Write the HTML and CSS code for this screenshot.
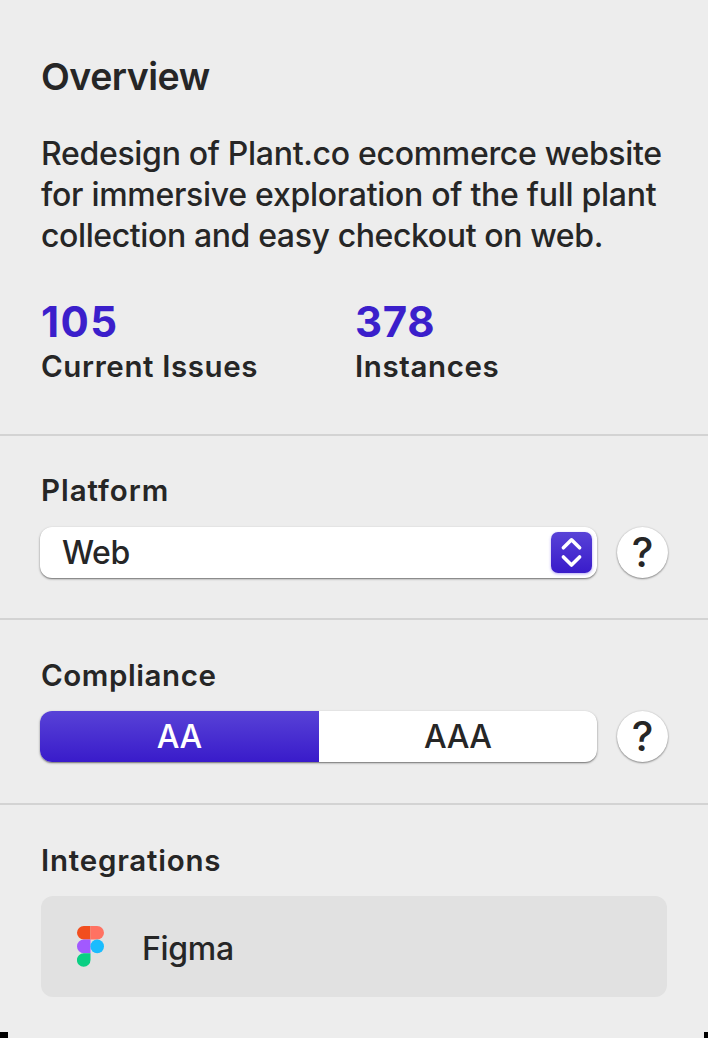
FILE: index.html
```html
<!DOCTYPE html>
<html lang="en">
<head>
<meta charset="utf-8">
<title>Overview</title>
<link rel="stylesheet" href="styles.css">
</head>
<body>
<main class="panel">
  <section class="section overview">
    <h1 class="title">Overview</h1>
    <p class="summary"><span class="line line-a">Redesign of Plant.co ecommerce website</span> <span class="line line-b">for immersive exploration of the full plant</span> <span class="line line-c">collection and easy checkout on web.</span></p>
    <div class="stats">
      <div class="stat"><strong class="number">105</strong><span class="label">Current Issues</span></div>
      <div class="stat"><strong class="number tight">378</strong><span class="label">Instances</span></div>
    </div>
  </section>
  <section class="section platform">
    <h2 class="heading">Platform</h2>
    <div class="row">
      <div class="select"><span class="web">Web</span>
        <span class="stepper"><svg width="41" height="41" viewBox="0 0 41 41" fill="none" stroke="#fff" stroke-width="3.6" stroke-linecap="round" stroke-linejoin="round"><path d="M12.4 15.8 20.5 7.8 28.6 15.8M12.4 25 20.5 33 28.6 25"/></svg></span>
      </div>
      <button class="help">?</button>
    </div>
  </section>
  <section class="section compliance">
    <h2 class="heading wide">Compliance</h2>
    <div class="row">
      <div class="segments"><span class="segment active">AA</span><span class="segment">AAA</span></div>
      <button class="help">?</button>
    </div>
  </section>
  <section class="section integrations">
    <h2 class="heading long">Integrations</h2>
    <div class="card">
      <svg class="logo" width="27" height="41" viewBox="0 0 27 41"><path fill="#f24e1e" d="M13.5 0H6.8a6.8 6.8 0 0 0 0 13.6h6.7z"/><path fill="#ff7262" d="M13.5 0h6.7a6.8 6.8 0 0 1 0 13.6h-6.7z"/><path fill="#a259ff" d="M13.5 13.6H6.8a6.8 6.8 0 0 0 0 13.6h6.7z"/><circle fill="#1abcfe" cx="20.2" cy="20.4" r="6.8"/><path fill="#0acf83" d="M6.8 27.2h6.7V34a6.8 6.8 0 1 1-6.7-6.8z"/></svg>
      <span class="figma">Figma</span>
    </div>
  </section>
</main>
</body>
</html>
```
FILE: styles.css
```css
* { box-sizing: border-box; }
body { margin: 0; background: #ededed; color: #262626; font-family: Inter, "Liberation Sans", sans-serif; }
.panel { position: relative; width: 708px; height: 1038px; overflow: hidden; background: #ededed; }
.panel::before, .panel::after { content: ""; position: absolute; bottom: 0; height: 6px; background: #000; }
.panel::before { left: 0; width: 8px; }
.panel::after { right: 0; width: 4px; }
.section { padding: 0 40px 0 41px; border-bottom: 2px solid #d3d3d3; }
.overview { height: 436px; padding-top: 54px; }
.title { margin: 0; font-size: 37.5px; font-weight: 560; line-height: 46px; letter-spacing: -.5px; }
.summary { margin: 34.4px 0 0; font-size: 32px; font-weight: 450; line-height: 40.6px; white-space: nowrap; }
.line { display: block; width: max-content; }
.line-a { letter-spacing: -.31px; }
.line-b { letter-spacing: -.28px; }
.line-c { letter-spacing: -.39px; }
.stats { display: grid; grid-template-columns: 314px 1fr; margin-top: 41px; }
.stat { display: flex; flex-direction: column; }
.number { color: #3b1fcb; font-size: 42px; font-weight: 700; line-height: 49px; letter-spacing: 1.4px; }
.tight { letter-spacing: .7px; }
.label { width: max-content; font-size: 29.5px; font-weight: 560; line-height: 40px; letter-spacing: .62px; }
.platform { height: 184px; padding-top: 36px; }
.compliance { height: 185px; padding-top: 37px; }
.integrations { padding-top: 37px; border: 0; }
.heading { width: max-content; margin: 0; font-size: 29.5px; font-weight: 560; line-height: 36px; letter-spacing: .96px; }
.wide { letter-spacing: .58px; }
.long { letter-spacing: .78px; }
.row { display: flex; gap: 20px; margin-top: 18px; }
.platform .row { margin-top: 19px; }
.select, .segments { display: flex; width: 557px; height: 51px; margin-left: -1px; border-radius: 12px; background: #fff; box-shadow: 0 1px 1.5px rgba(0,0,0,.4), 0 1px 3px rgba(0,0,0,.2); }
.select { align-items: center; justify-content: space-between; padding: 0 5px 0 22px; font-size: 32px; font-weight: 450; letter-spacing: -.4px; }
.stepper { width: 41px; height: 41px; border-radius: 7px; background: linear-gradient(#5842d7, #391bca); box-shadow: 0 1px 3px rgba(65,35,230,.4); }
.stepper svg { display: block; }
.help { flex: none; width: 51px; height: 51px; padding: 0; border: 0; border-radius: 50%; background: #fff; color: #262626; font: 500 41px/51px Inter, sans-serif; box-shadow: 0 1px 2px rgba(0,0,0,.4), 0 0 2px rgba(0,0,0,.15); }
.segments { overflow: hidden; }
.segment { flex: 1; font-size: 32px; font-weight: 450; line-height: 51px; letter-spacing: -.5px; text-align: center; }
.active { background: linear-gradient(#5842d7, #391bca); color: #fff; }
.card { display: flex; align-items: center; width: 626px; height: 101px; margin-top: 18px; padding-left: 36.4px; border-radius: 12px; background: #e1e1e1; font-size: 32px; font-weight: 450; }
.figma { margin-left: 37.6px; padding-top: 3px; letter-spacing: -.3px; }
```
